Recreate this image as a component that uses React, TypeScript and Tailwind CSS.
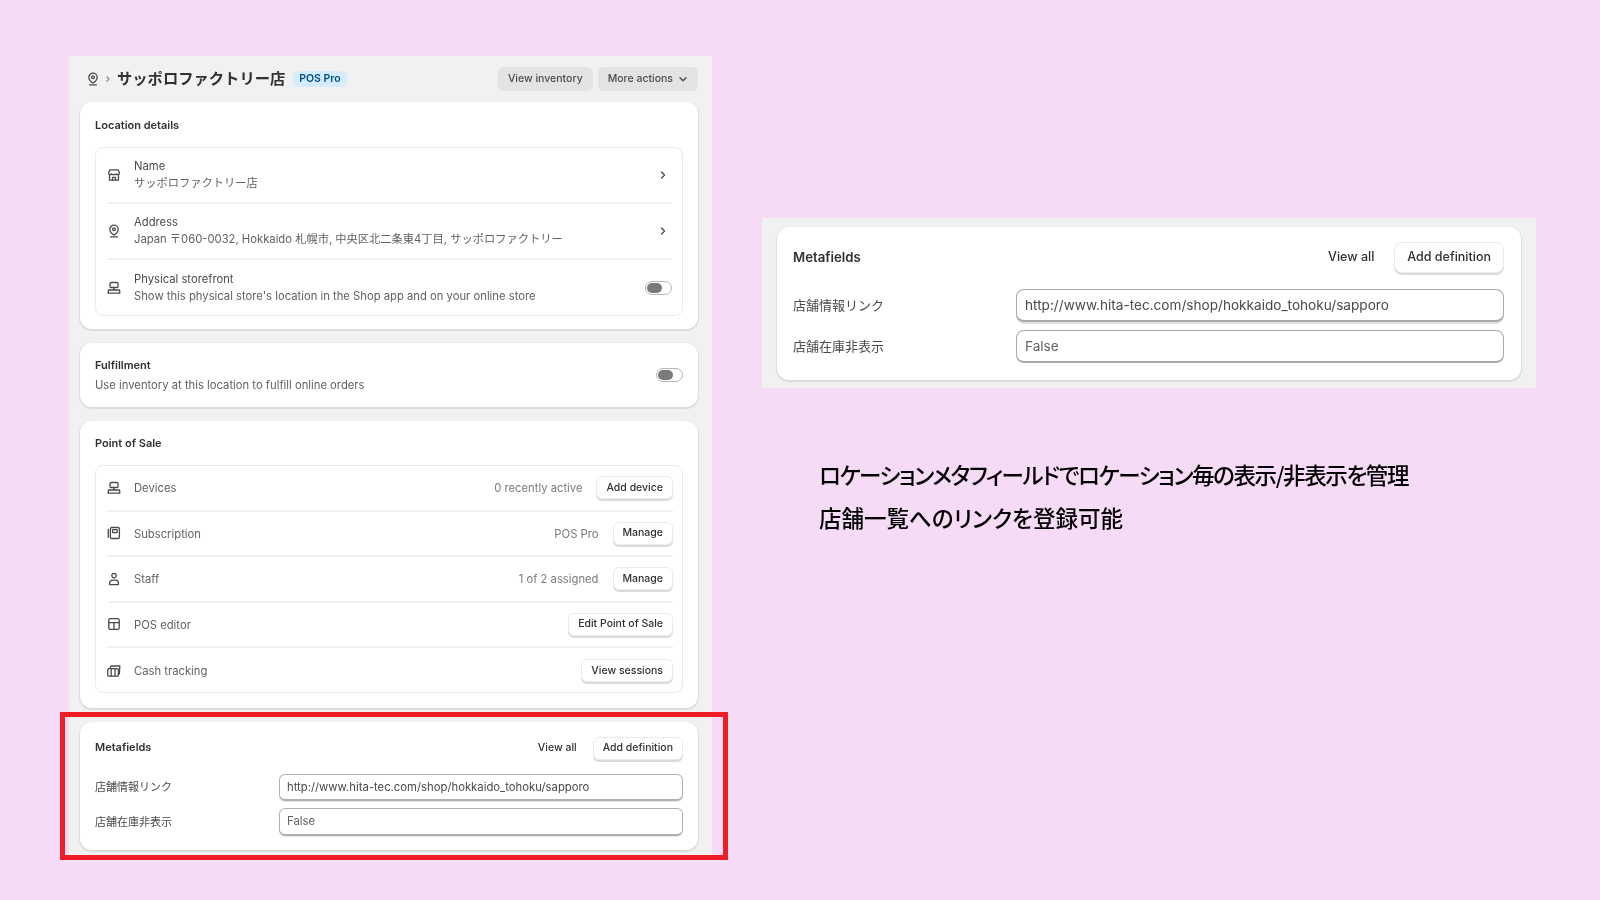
import React from "react";

const Ic = ({ children }: { children: React.ReactNode }) => (
  <svg width="14" height="14" viewBox="0 0 14 14" fill="none" stroke="#4a4a4a" strokeWidth="1.3" strokeLinejoin="round" strokeLinecap="round" className="shrink-0">
    {children}
  </svg>
);

const PinIcon = () => (
  <Ic>
    <path d="M7 1.2a4.2 4.2 0 0 1 4.2 4.2c0 2.2-2.4 4.4-4.2 5.6-1.8-1.2-4.2-3.4-4.2-5.6A4.2 4.2 0 0 1 7 1.2Z" />
    <circle cx="7" cy="5.3" r="1.4" />
    <path d="M3.5 12.8h7" />
  </Ic>
);
const StoreIcon = () => (
  <Ic>
    <path d="M3 1.8h8l1.5 3.2a1.6 1.6 0 0 1-2.8 1 1.9 1.9 0 0 1-2.7.2 1.9 1.9 0 0 1-2.7-.2 1.6 1.6 0 0 1-2.8-1Z" />
    <path d="M2.5 7v5.2h9V7" />
    <path d="M5.5 12v-2.6h3V12" />
  </Ic>
);
const DeviceIcon = () => (
  <Ic>
    <rect x="3" y="1.5" width="8" height="5" rx="1" />
    <path d="M1.5 9h11l.4 3.2H1.1Z" />
    <path d="M7 6.5V9" />
  </Ic>
);
const SubIcon = () => (
  <Ic>
    <rect x="3.4" y="1.5" width="9" height="11" rx="1.3" />
    <path d="M1.3 3.5v7.8" />
    <rect x="5.6" y="3.6" width="4.6" height="3" rx="0.4" />
  </Ic>
);
const StaffIcon = () => (
  <Ic>
    <circle cx="7" cy="3.6" r="2.2" />
    <path d="M2.6 12.6v-1.4a3 3 0 0 1 3-3h2.8a3 3 0 0 1 3 3v1.4Z" />
  </Ic>
);
const EditorIcon = () => (
  <Ic>
    <rect x="1.8" y="1.6" width="10.4" height="10.8" rx="1.6" />
    <path d="M1.8 5.6h10.4M7 5.6v6.8" />
  </Ic>
);
const CashIcon = () => (
  <Ic>
    <rect x="0.8" y="4.6" width="10.6" height="7.6" rx="1" />
    <path d="M3 4.4 4 2h8.8l-.4 7.8-1 .4" />
    <path d="M4.2 4.8v7.2M8 4.8v7.2" />
  </Ic>
);

const Chevron = () => (
  <svg width="10" height="10" viewBox="0 0 10 10" fill="none" stroke="#4a4a4a" strokeWidth="1.4" strokeLinecap="round" strokeLinejoin="round" className="shrink-0">
    <path d="m3.5 2 3 3-3 3" />
  </svg>
);

const Toggle = () => (
  <div className="flex h-[14px] w-[27px] shrink-0 items-center rounded-full border border-[#b5b5b5] bg-white pl-px">
    <div className="h-[10px] w-[15px] rounded-full bg-[#7a7a7a]" />
  </div>
);

const Card = ({ children, className }: { children: React.ReactNode; className: string }) => (
  <div className={`rounded-xl bg-white shadow-[0_1px_1px_1px_rgba(0,0,0,0.09)] ${className}`}>{children}</div>
);

const Title = ({ children }: { children: React.ReactNode }) => (
  <div className="text-[11px] leading-[14px] font-semibold text-[#303030]">{children}</div>
);

const Btn = ({ children }: { children: React.ReactNode }) => (
  <div className="flex h-[23px] items-center rounded-md border border-[#ebebeb] bg-white px-[9px] text-[10.5px] font-medium whitespace-nowrap text-[#303030] shadow-[0_2px_0_rgba(0,0,0,0.14)]">
    {children}
  </div>
);

const DetailRow = ({ icon, label, sub, right, last }: { icon: React.ReactNode; label: string; sub: string; right: React.ReactNode; last?: boolean }) => (
  <div className={`flex h-[56px] items-center gap-[13px] ${last ? "" : "border-b-2 border-[#f1f1f1]"}`}>
    {icon}
    <div className="mb-px min-w-0 flex-1">
      <div className="text-[11.25px] leading-[16.5px] text-[#4a4a4a]">{label}</div>
      <div className="text-[11.25px] leading-[16.5px] whitespace-nowrap text-[#616161]">{sub}</div>
    </div>
    <div className="flex w-[27px] shrink-0 justify-end">{right}</div>
  </div>
);

const PosRow = ({ icon, label, value, button, last }: { icon: React.ReactNode; label: string; value?: string; button: string; last?: boolean }) => (
  <div className={`flex h-[45.5px] items-center gap-[13px] ${last ? "" : "border-b-2 border-[#f1f1f1]"}`}>
    {icon}
    <div className="flex-1 pt-[2px] text-[11.25px] text-[#616161]">{label}</div>
    {value ? <div className="mr-px pt-[2px] text-[11.25px] text-[#7a7a7a]">{value}</div> : null}
    <Btn>{button}</Btn>
  </div>
);

export default function App() {
  return (
    <div className="flex h-[900px] items-start bg-[#f6dbf6] pt-[56px] pl-[69px] [font-family:Inter,'Noto_Sans_CJK_JP',sans-serif]">
      <div className="h-[800px] w-[643px] shrink-0 bg-[#f1f1f1] pr-[14px] pl-[11px] blur-[0.55px]">
        <div className="flex h-[46px] items-center pl-[6px]">
          <PinIcon />
          <svg width="8" height="10" viewBox="0 0 8 10" fill="none" stroke="#8a8a8a" strokeWidth="1.2" className="mx-[4px]">
            <path d="m2.5 2.5 2.5 2.5-2.5 2.5" />
          </svg>
          <div className="ml-[1px] pt-px text-[15.3px] font-bold whitespace-nowrap text-[#303030]">サッポロファクトリー店</div>
          <div className="ml-[8px] flex h-[16px] items-center rounded-md bg-[#d5ebff] px-[6px] text-[10.5px] font-semibold text-[#00527c]">POS Pro</div>
          <div className="ml-auto flex h-[24px] items-center rounded-md bg-[#e3e3e3] px-[10px] text-[10.5px] font-medium text-[#4a4a4a]">View inventory</div>
          <div className="ml-[5px] flex h-[24px] items-center gap-[5px] rounded-md bg-[#e3e3e3] px-[10px] text-[10.5px] font-medium text-[#4a4a4a]">
            More actions
            <svg width="10" height="10" viewBox="0 0 10 10" fill="none" stroke="#4a4a4a" strokeWidth="1.3" strokeLinecap="round" strokeLinejoin="round">
              <path d="m2 3.8 3 3 3-3" />
            </svg>
          </div>
        </div>

        <Card className="h-[227px] px-[15px] pt-[16px]">
          <Title>Location details</Title>
          <div className="mt-[15px] h-[169px] rounded-lg border border-[#ebebeb] pr-[10px] pl-[11px]">
            <DetailRow icon={<StoreIcon />} label="Name" sub="サッポロファクトリー店" right={<div className="pr-[4px]"><Chevron /></div>} />
            <DetailRow icon={<PinIcon />} label="Address" sub="Japan 〒060-0032, Hokkaido 札幌市, 中央区北二条東4丁目, サッポロファクトリー" right={<div className="pr-[4px]"><Chevron /></div>} />
            <DetailRow icon={<DeviceIcon />} label="Physical storefront" sub="Show this physical store's location in the Shop app and on your online store" right={<Toggle />} last />
          </div>
        </Card>

        <Card className="mt-[14px] flex h-[64px] items-center justify-between pr-[15px] pl-[15px]">
          <div>
            <Title>Fulfillment</Title>
            <div className="mt-[5px] text-[11.25px] leading-[16px] text-[#616161]">Use inventory at this location to fulfill online orders</div>
          </div>
          <Toggle />
        </Card>

        <Card className="mt-[14px] h-[287px] px-[15px] pt-[15px]">
          <Title>Point of Sale</Title>
          <div className="mt-[15px] h-[228px] rounded-lg border border-[#ebebeb] pr-[9px] pl-[11px]">
            <PosRow icon={<DeviceIcon />} label="Devices" value="0 recently active" button="Add device" />
            <PosRow icon={<SubIcon />} label="Subscription" value="POS Pro" button="Manage" />
            <PosRow icon={<StaffIcon />} label="Staff" value="1 of 2 assigned" button="Manage" />
            <PosRow icon={<EditorIcon />} label="POS editor" button="Edit Point of Sale" />
            <PosRow icon={<CashIcon />} label="Cash tracking" button="View sessions" last />
          </div>
        </Card>

        <div className="relative mt-[14px]">
          <Card className="h-[128px] px-[15px] pt-[14px]">
            <div className="flex h-[24px] items-center">
              <div className="mb-[2px]"><Title>Metafields</Title></div>
              <div className="ml-auto text-[10.5px] font-medium text-[#303030]">View all</div>
              <div className="ml-[16px]"><Btn>Add definition</Btn></div>
            </div>
            <div className="mt-[14px] flex h-[27px] items-center">
              <div className="w-[184px] text-[11px] text-[#4a4a4a]">店舗情報リンク</div>
              <div className="flex h-full flex-1 items-center rounded-md border border-b-2 border-[#b0b0b0] px-[7px] text-[11.3px] text-[#4a4a4a] shadow-[0_1px_0_rgba(0,0,0,0.1)]">http://www.hita-tec.com/shop/hokkaido_tohoku/sapporo</div>
            </div>
            <div className="mt-[7px] flex h-[28px] items-center">
              <div className="w-[184px] text-[11px] text-[#4a4a4a]">店舗在庫非表示</div>
              <div className="flex h-full flex-1 items-center rounded-md border border-b-2 border-[#b0b0b0] px-[7px] text-[11.3px] text-[#616161] shadow-[0_1px_0_rgba(0,0,0,0.1)]">False</div>
            </div>
          </Card>
          <div className="absolute top-[-10px] right-[-30px] left-[-20px] h-[148px] border-[5px] border-[#ee1c25]" />
        </div>
      </div>

      <div className="ml-[50px] flex w-[774px] shrink-0 flex-col pt-[162px]">
        <div className="h-[170px] bg-[#f1f1f1] px-[15px] pt-[9px] blur-[0.55px]">
          <div className="h-[153px] rounded-xl bg-white pt-[15px] pr-[17px] pl-[16px] shadow-[0_1px_1px_1px_rgba(0,0,0,0.09)]">
            <div className="flex h-[31px] items-center">
              <div className="text-[13.2px] font-semibold text-[#303030]">Metafields</div>
              <div className="ml-auto text-[12.5px] font-medium text-[#303030]">View all</div>
              <div className="ml-[20px] flex h-[31px] items-center rounded-lg border border-[#ebebeb] bg-white px-[12px] text-[12.5px] font-medium text-[#303030] shadow-[0_2px_0_rgba(0,0,0,0.14)]">Add definition</div>
            </div>
            <div className="mt-[16px] flex h-[33px] items-center">
              <div className="w-[223px] text-[13px] text-[#4a4a4a]">店舗情報リンク</div>
              <div className="flex h-full flex-1 items-center rounded-lg border border-b-2 border-[#a8a8a8] px-[8px] pt-px text-[13.6px] text-[#4a4a4a] shadow-[0_2px_0_rgba(0,0,0,0.12)]">http://www.hita-tec.com/shop/hokkaido_tohoku/sapporo</div>
            </div>
            <div className="mt-[8px] flex h-[33px] items-center">
              <div className="w-[223px] text-[13px] text-[#4a4a4a]">店舗在庫非表示</div>
              <div className="flex h-full flex-1 items-center rounded-lg border border-b-2 border-[#a8a8a8] px-[8px] pt-px text-[13.6px] text-[#616161]">False</div>
            </div>
          </div>
        </div>
        <div className="mt-[65px] pl-[57px] text-[22.5px] leading-[43px] font-medium whitespace-nowrap text-black blur-[0.25px] [font-family:'Noto_Sans_CJK_JP',sans-serif] [font-feature-settings:'palt']">
          <div className="tracking-[-1.38px]">ロケーションメタフィールドでロケーション毎の表示/非表示を管理</div>
          <div>店舗一覧へのリンクを登録可能</div>
        </div>
      </div>
    </div>
  );
}
